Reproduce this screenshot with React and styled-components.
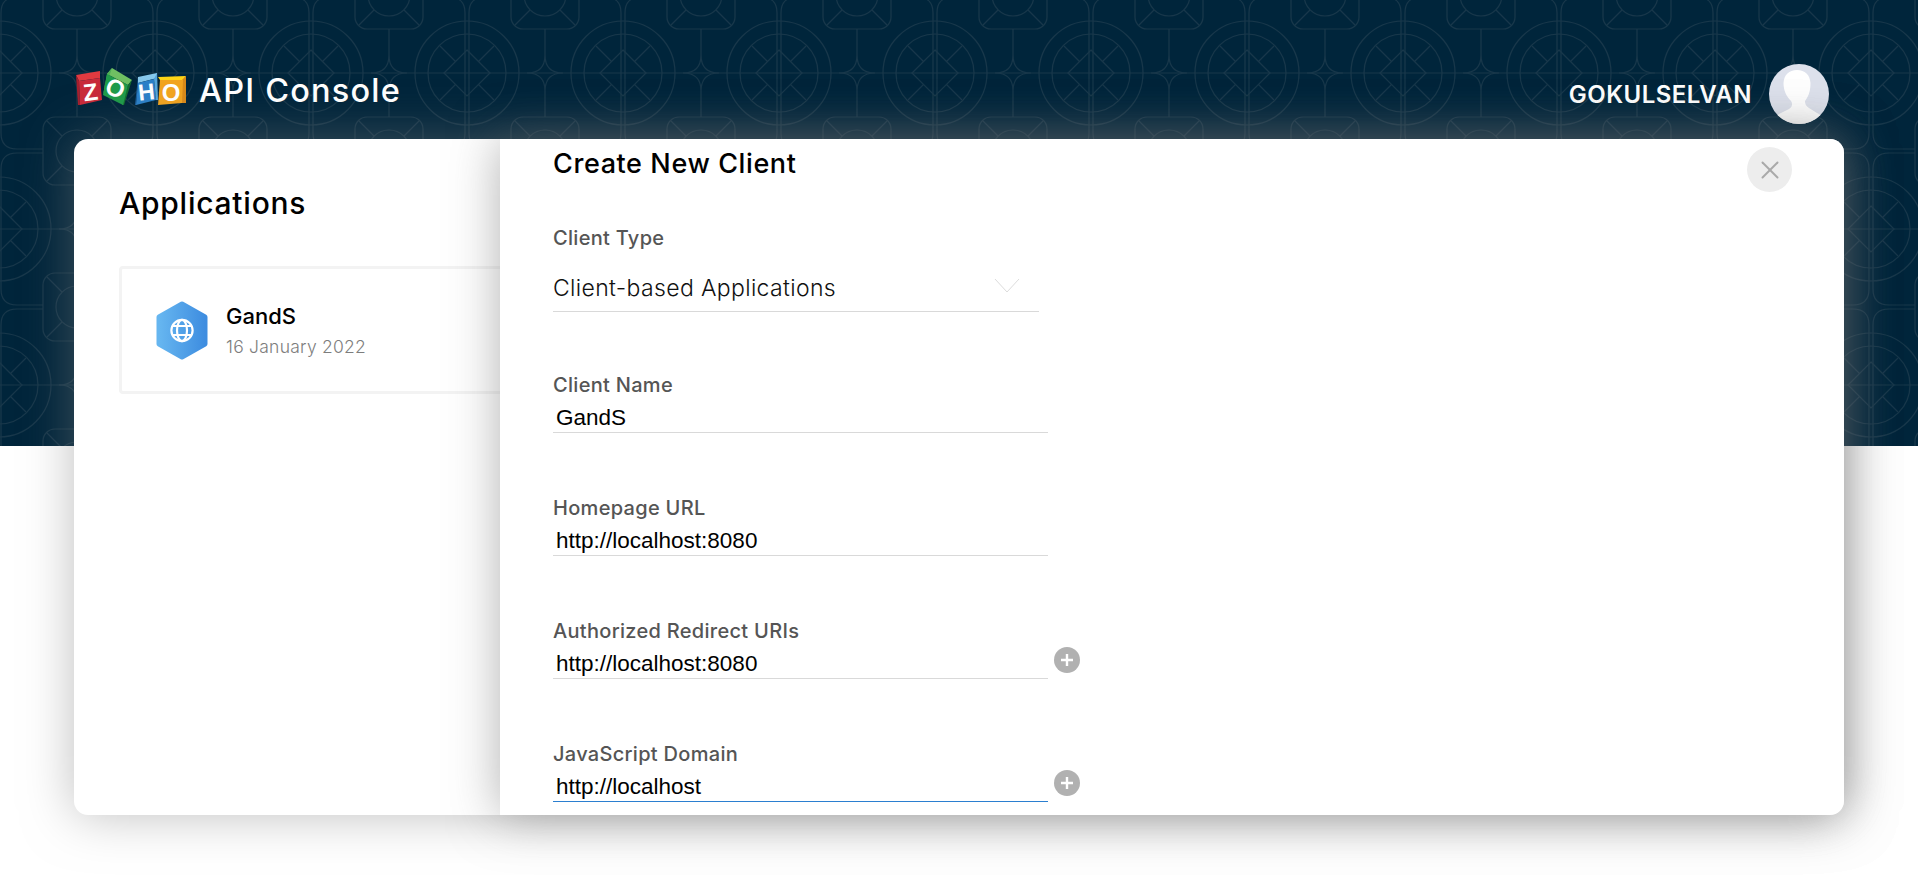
import React from 'react'
import styled, { createGlobalStyle } from 'styled-components'
import { X } from 'lucide-react'

const GlobalStyle = createGlobalStyle`
    html, body {
        margin: 0;
        padding: 0;
        background: #fff;
        overflow: hidden;
    }
    body {
        font-family: Inter, "Open Sans", sans-serif;
    }
`

// one 156px tile of the header background
const squareAt = (x, y) => `
    <rect x="${x - 34}" y="${y - 34}" width="68" height="68" rx="12"/>
    <circle cx="${x}" cy="${y}" r="21"/>
    <path d="M${x - 30} ${y - 30}L${x - 15} ${y - 15}M${x + 30} ${y - 30}L${x + 15} ${y - 15}M${x - 30} ${y + 30}L${x - 15} ${y + 15}M${x + 30} ${y + 30}L${x + 15} ${y + 15}"/>`

const starAt = (x) => `
    <path d="M${x} 34V60Q${x} 78 ${x + 18} 78Q${x} 78 ${x} 96V122M${x} 60Q${x} 78 ${x - 18} 78Q${x} 78 ${x} 96"/>`

const tile = `<svg xmlns="http://www.w3.org/2000/svg" width="156" height="156" viewBox="0 0 156 156">
<g fill="none" stroke="#18374a" stroke-width="1.2">
    <circle cx="78" cy="78" r="52"/>
    <circle cx="78" cy="78" r="39"/>
    <path d="M78 55L101 78L78 101L55 78Z"/>
    <path d="M89.5 66.5L105 51M66.5 66.5L51 51M89.5 89.5L105 105M66.5 89.5L51 105"/>
    <path d="M0 78H156"/>
    <path d="M76 18V138M80 18V138"/>
    <path d="M34 2H60Q76 2 76 18M122 2H96Q80 2 80 18M34 154H60Q76 154 76 138M122 154H96Q80 154 80 138"/>
    ${squareAt(0, 0)}${squareAt(156, 0)}${squareAt(0, 156)}${squareAt(156, 156)}
    ${starAt(0)}${starAt(156)}
</g></svg>`

const Page = styled.div`
    width: 1918px;
    height: 891px;
    overflow: hidden;
`

const Header = styled.header`
    height: 446px;
    background-color: #00253b;
    background-image: url("data:image/svg+xml,${encodeURIComponent(tile)}");
    background-position: 76.7px -5px;
    box-sizing: border-box;
    padding: 64px 89px 0 76px;
`

const TopBar = styled.div`
    display: flex;
    align-items: center;
    justify-content: space-between;
    height: 60px;
`

const Brand = styled.div`
    display: flex;
    align-items: center;
    gap: 13px;
`

const Logo = styled.svg`
    width: 110px;
    height: 38px;
    margin-top: -16px;
`

const BrandName = styled.span`
    color: #fff;
    font-size: 32.5px;
    font-weight: 500;
    letter-spacing: 1.2px;
    margin-top: -8px;
`

const User = styled.div`
    display: flex;
    align-items: center;
    gap: 17px;
`

const UserName = styled.span`
    color: #fff;
    font-size: 24px;
    font-weight: 600;
    letter-spacing: 0.5px;
`

const Avatar = styled.div`
    width: 60px;
    height: 60px;
    border-radius: 50%;
    background: #dde1ec;
    overflow: hidden;
    svg {
        display: block;
    }
`

const Panel = styled.main`
    position: relative;
    height: 676px;
    margin: -307px 74px 0;
    background: #fff;
    border-radius: 14px;
    box-shadow: 0 0 50px rgba(127, 127, 127, 0.5);
    padding: 44px 45px;
    box-sizing: border-box;
`

const Heading = styled.h1`
    margin: 0 0 43px;
    font-size: 30px;
    line-height: 40px;
    font-weight: 450;
    letter-spacing: 0.75px;
    color: #000;
`

const Card = styled.div`
    display: flex;
    align-items: center;
    gap: 18px;
    width: 480px;
    height: 128px;
    box-sizing: border-box;
    border: 3px solid #f3f3f3;
    border-radius: 4px;
    padding: 0 34px;
`

const Hexagon = styled.svg`
    width: 52px;
    height: 59px;
    flex: none;
`

const CardText = styled.div`
    margin-top: 2px;
`

const CardName = styled.div`
    font-size: 22px;
    font-weight: 450;
    color: #000;
    line-height: 30px;
    margin-bottom: 1px;
`

const CardDate = styled.div`
    font-size: 17.5px;
    font-weight: 300;
    letter-spacing: 0.25px;
    color: #7d7d7d;
    line-height: 30px;
`

const Drawer = styled.aside`
    position: absolute;
    top: 0;
    right: 0;
    bottom: 0;
    left: 426px;
    z-index: 2;
    background: #fff;
    border-radius: 0 14px 14px 0;
    box-shadow: 0 0 50px rgba(100, 100, 100, 0.5);
    overflow: hidden;
    padding: 10px 0 0 53px;
    box-sizing: border-box;
`

const CloseButton = styled.button`
    position: absolute;
    top: 8px;
    right: 52px;
    width: 45px;
    height: 45px;
    border: 0;
    padding: 0;
    border-radius: 50%;
    background: #ededed;
    color: #a9a9a9;
    display: flex;
    align-items: center;
    justify-content: center;
`

const DrawerTitle = styled.h2`
    margin: 0 0 46px;
    font-size: 27px;
    line-height: 30px;
    font-weight: 450;
    letter-spacing: 0.6px;
    color: #000;
`

const Field = styled.div`
    margin-bottom: ${(p) => (p.$select ? '60px' : '62px')};
`

const Label = styled.div`
    font-size: 20px;
    line-height: 26px;
    margin-bottom: -2px;
    font-weight: 450;
    letter-spacing: 0.3px;
    color: #555;
`

const Select = styled.div`
    display: flex;
    align-items: center;
    justify-content: space-between;
    width: 486px;
    height: 63px;
    padding-top: 16px;
    box-sizing: border-box;
    border-bottom: 1px solid #d9d9d9;
    font-size: 23px;
    font-weight: 350;
    letter-spacing: 0.35px;
    color: #111;
    svg {
        margin-right: 19px;
        margin-top: -5px;
    }
`

const InputRow = styled.div`
    display: flex;
    align-items: flex-end;
    gap: 6px;
`

const Value = styled.div`
    width: 495px;
    height: 37px;
    padding: 6px 0 0 3px;
    box-sizing: border-box;
    border-bottom: 1px solid ${(p) => (p.$focused ? '#2b7fd0' : '#d9d9d9')};
    font-family: "Liberation Sans", Arial, sans-serif;
    font-size: 22.5px;
    line-height: 31px;
    color: #000;
`

const AddButton = styled.button`
    flex: none;
    width: 26px;
    height: 26px;
    margin-bottom: 6px;
    padding: 0;
    border: 0;
    border-radius: 50%;
    background: #b1b1b1;
    display: flex;
    align-items: center;
    justify-content: center;
`

const ZohoLogo = () => (
    <Logo viewBox="0 0 110 38">
        <g fontFamily="'Liberation Sans', Arial, sans-serif" fontWeight="700" fontSize="24" fill="#fff" textAnchor="middle">
            <polygon points="0,8 24,4 24,11 3,14" fill="#e03a40" />
            <polygon points="0,8 3,14 4,38 2,38" fill="#a51f2e" />
            <polygon points="3,14 24,11 26,33 4,38" fill="#c92a3a" />
            <text y="8.5" transform="translate(14.5 25) rotate(-7)">Z</text>

            <polygon points="36,1 56,13 52,18 31,7" fill="#6fbf62" />
            <polygon points="56,13 52,18 46,38 48,38" fill="#15702f" />
            <polygon points="31,7 36,1 27,28" fill="#4fae55" />
            <polygon points="31,7 52,18 47,38 27,28" fill="#1f9b4a" />
            <text y="8.5" transform="translate(39.5 21) rotate(24)">O</text>

            <polygon points="62,10 81,6 81,11 62,16" fill="#86c8ec" />
            <polygon points="62,10 62,16 60,38 59,38" fill="#1a5f9e" />
            <polygon points="62,16 78,12 80,33 60,38" fill="#2b80c8" />
            <polygon points="78,12 81,6 82,33 80,33" fill="#56a6dc" />
            <text y="8.5" fontSize="23" transform="translate(70.5 24.5) rotate(-6)">H</text>

            <polygon points="82,10 110,9 107,13 84,13" fill="#ffd516" />
            <polygon points="106,13 110,9 110,36 106,36" fill="#d98a1a" />
            <polygon points="84,13 107,13 106,36 82,38" fill="#f2a41f" />
            <text x="95" y="33.5">O</text>
        </g>
    </Logo>
)

const AvatarIcon = () => (
    <Avatar>
        <svg width="60" height="60" viewBox="0 0 60 60">
            <path
                d="M28 6C36 6 41 11 41.5 19C41.5 26 40 32 36 37C36 40 37 42 40 44L48 49C52 51 55 53 56 60H4C5 54 7 51 12 49L20 45C23 43 24 40 22 37C17 32 14.5 26 14.5 19C15 11 20 6 28 6Z"
                fill="#fff"
            />
        </svg>
    </Avatar>
)

const AppIcon = () => (
    <Hexagon viewBox="0 0 52 59">
        <defs>
            <linearGradient id="hexFill" x1="0" x2="1" y1="0" y2="0">
                <stop offset="0" stopColor="#66b6f0" />
                <stop offset="1" stopColor="#3e8de0" />
            </linearGradient>
        </defs>
        <polygon
            points="26,3 49,16 49,43 26,56 3,43 3,16"
            fill="url(#hexFill)"
            stroke="url(#hexFill)"
            strokeWidth="5"
            strokeLinejoin="round"
        />
        <g fill="none" stroke="#fff" strokeWidth="2.2">
            <circle cx="26" cy="29.5" r="10.6" />
            <ellipse cx="26" cy="29.5" rx="5" ry="10.6" />
            <path d="M16.5 25H35.5M16.5 34H35.5" />
        </g>
    </Hexagon>
)

const PlusIcon = () => (
    <svg width="14" height="14" viewBox="0 0 14 14">
        <path d="M7 1V13M1 7H13" stroke="#fff" strokeWidth="2.4" />
    </svg>
)

const TextField = ({ label, value, focused, action }) => (
    <Field>
        <Label>{label}</Label>
        <InputRow>
            <Value $focused={focused}>{value}</Value>
            {action && (
                <AddButton>
                    <PlusIcon />
                </AddButton>
            )}
        </InputRow>
    </Field>
)

const App = () => {
    return (
        <Page>
            <GlobalStyle />
            <Header>
                <TopBar>
                    <Brand>
                        <ZohoLogo />
                        <BrandName>API Console</BrandName>
                    </Brand>
                    <User>
                        <UserName>GOKULSELVAN</UserName>
                        <AvatarIcon />
                    </User>
                </TopBar>
            </Header>
            <Panel>
                <Heading>Applications</Heading>
                <Card>
                    <AppIcon />
                    <CardText>
                        <CardName>GandS</CardName>
                        <CardDate>16 January 2022</CardDate>
                    </CardText>
                </Card>
                <Drawer>
                    <CloseButton>
                        <X size={30} strokeWidth={1.6} />
                    </CloseButton>
                    <DrawerTitle>Create New Client</DrawerTitle>
                    <Field $select>
                        <Label>Client Type</Label>
                        <Select>
                            Client-based Applications
                            <svg width="26" height="15" viewBox="0 0 26 15">
                                <path d="M1 1L13 14L25 1" fill="none" stroke="#dcdcdc" strokeWidth="1" />
                            </svg>
                        </Select>
                    </Field>
                    <TextField label="Client Name" value="GandS" />
                    <TextField label="Homepage URL" value="http://localhost:8080" />
                    <TextField label="Authorized Redirect URIs" value="http://localhost:8080" action />
                    <TextField label="JavaScript Domain" value="http://localhost" focused action />
                </Drawer>
            </Panel>
        </Page>
    )
}

export default App
